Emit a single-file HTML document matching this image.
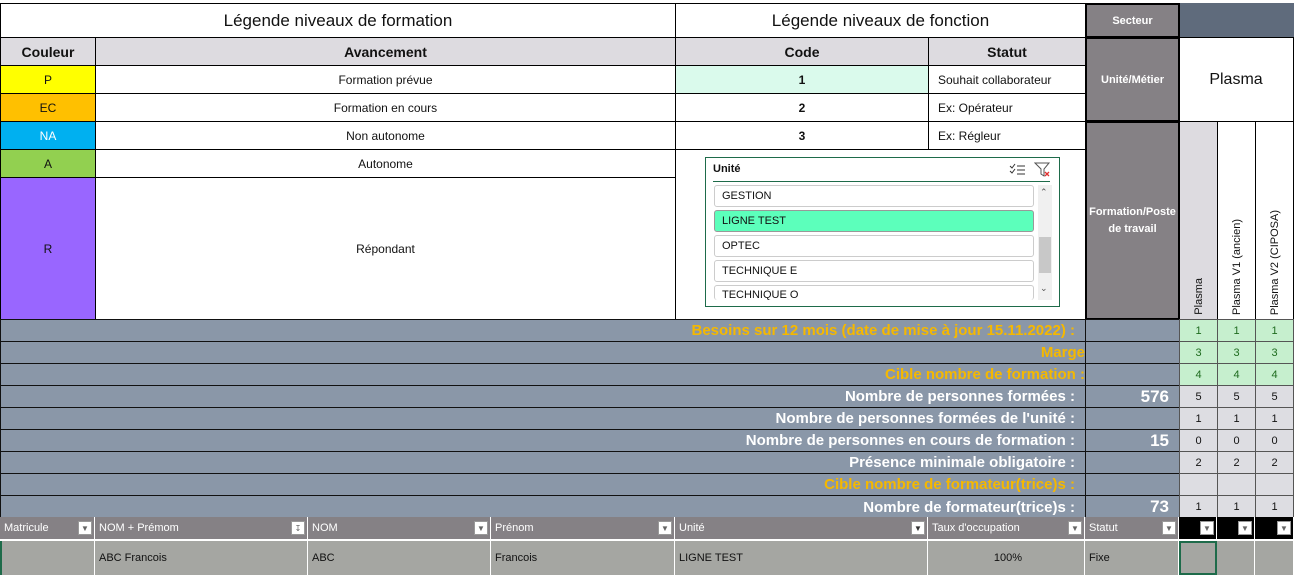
<!DOCTYPE html>
<html><head><meta charset="utf-8"><style>
*{box-sizing:border-box;margin:0;padding:0}
body{width:1294px;height:577px;background:#fff;position:relative;overflow:hidden;font-family:"Liberation Sans",Arial,sans-serif;font-size:12px;color:#111}
.c{position:absolute;display:flex;align-items:center;justify-content:center;border:1px solid #000;white-space:nowrap;overflow:hidden}
.r{justify-content:flex-end;padding-right:10px}
.l{justify-content:flex-start;padding-left:4px}
.st{background:#8a97a8;border-color:#111}
.or{color:#f5b800;font-weight:bold;font-size:15px}
.wh{color:#fff;font-weight:bold;font-size:15px}
.g{background:#c6efce;color:#1e6b1e;font-size:11px;border-color:#555}
.gy{background:#dddde2;font-size:11px;border-color:#555}
.h{background:#858185;color:#fff;font-size:11px;border:none;border-right:1px solid #fff;justify-content:flex-start;padding-left:4px}
.dd{position:absolute;right:2px;top:4px;width:14px;height:14px;background:#fff;border:1px solid #999;font-size:8px;color:#666;display:flex;align-items:center;justify-content:center}
.d{background:#a5a6a2;border:none;border-right:1px solid #fff;justify-content:flex-start;padding-left:4px;font-size:11px}
.v{writing-mode:vertical-rl;transform:rotate(180deg);font-size:11px;padding-top:4px}
.it{position:absolute;left:8px;width:320px;height:22px;border:1px solid #ccc;border-radius:3px;background:#fff;font-size:11px;display:flex;align-items:center;padding-left:7px}
</style></head><body>
<!-- top titles -->
<div class="c" style="left:0;top:3px;width:676px;height:35px;font-size:17px">Légende niveaux de formation</div>
<div class="c" style="left:675px;top:3px;width:411px;height:35px;font-size:17px">Légende niveaux de fonction</div>
<div class="c" style="left:0;top:37px;width:96px;height:29px;background:#dddbe0;font-weight:bold;font-size:14px">Couleur</div>
<div class="c" style="left:95px;top:37px;width:581px;height:29px;background:#dddbe0;font-weight:bold;font-size:14px">Avancement</div>
<div class="c" style="left:675px;top:37px;width:254px;height:29px;background:#dddbe0;font-weight:bold;font-size:14px">Code</div>
<div class="c" style="left:928px;top:37px;width:158px;height:29px;background:#dddbe0;font-weight:bold;font-size:14px">Statut</div>

<div class="c" style="left:0;top:65px;width:96px;height:29px;background:#ffff00">P</div>
<div class="c" style="left:95px;top:65px;width:581px;height:29px">Formation prévue</div>
<div class="c" style="left:0;top:93px;width:96px;height:29px;background:#ffc000">EC</div>
<div class="c" style="left:95px;top:93px;width:581px;height:29px">Formation en cours</div>
<div class="c" style="left:0;top:121px;width:96px;height:29px;background:#00b0f0;color:#fff">NA</div>
<div class="c" style="left:95px;top:121px;width:581px;height:29px">Non autonome</div>
<div class="c" style="left:0;top:149px;width:96px;height:29px;background:#92d050">A</div>
<div class="c" style="left:95px;top:149px;width:581px;height:29px">Autonome</div>
<div class="c" style="left:0;top:177px;width:96px;height:143px;background:#9966ff">R</div>
<div class="c" style="left:95px;top:177px;width:581px;height:143px">Répondant</div>

<div class="c" style="left:675px;top:65px;width:254px;height:29px;background:#dafaec;font-weight:bold">1</div>
<div class="c l" style="left:928px;top:65px;width:158px;height:29px;padding-left:9px">Souhait collaborateur</div>
<div class="c" style="left:675px;top:93px;width:254px;height:29px;font-weight:bold">2</div>
<div class="c l" style="left:928px;top:93px;width:158px;height:29px;padding-left:9px">Ex: Opérateur</div>
<div class="c" style="left:675px;top:121px;width:254px;height:29px;font-weight:bold">3</div>
<div class="c l" style="left:928px;top:121px;width:158px;height:29px;padding-left:9px">Ex: Régleur</div>
<div class="c" style="left:675px;top:149px;width:411px;height:171px;border-top:1px solid #000"></div>

<!-- slicer -->
<div style="position:absolute;left:705px;top:157px;width:355px;height:150px;border:1px solid #1e6b4a;background:#fff">
 <div style="position:absolute;left:7px;top:5px;font-weight:bold;font-size:11px">Unité</div>
 <svg style="position:absolute;left:303px;top:5px" width="18" height="14" viewBox="0 0 18 14"><path d="M1 3l2 2 3-4M1 8l2 2 3-4M8 3h8M8 7h8M8 11h8" stroke="#333" fill="none" stroke-width="1"/></svg>
 <svg style="position:absolute;left:328px;top:4px" width="18" height="16" viewBox="0 0 18 16"><path d="M1 1h14l-5 6v7l-3-2V7z" stroke="#555" fill="none"/><path d="M11 10l4 4M15 10l-4 4" stroke="#e03030" stroke-width="1.3"/></svg>
 <div style="position:absolute;left:7px;top:23px;width:337px;height:1px;background:#1e6b4a"></div>
 <div class="it" style="top:27px">GESTION</div>
 <div class="it" style="top:52px;background:#5cffbb;border-color:#999">LIGNE TEST</div>
 <div class="it" style="top:77px">OPTEC</div>
 <div class="it" style="top:102px">TECHNIQUE E</div>
 <div class="it" style="top:127px;height:15px;overflow:hidden;align-items:flex-start;padding-top:3px;border-bottom:none">TECHNIQUE O</div>
 <div style="position:absolute;left:332px;top:27px;width:14px;height:115px;background:#f0f0f0"></div>
 <div style="position:absolute;left:333px;top:79px;width:12px;height:36px;background:#c8c8c8"></div>
 <div style="position:absolute;left:334px;top:29px;font-size:9px;color:#555">&#8963;</div>
 <div style="position:absolute;left:334px;top:125px;font-size:9px;color:#555">&#8964;</div>
</div>

<!-- right header -->
<div class="c" style="left:1085px;top:3px;width:95px;height:35px;background:#858185;color:#fff;font-weight:bold;font-size:11px;border-width:2px">Secteur</div>
<div class="c" style="left:1085px;top:37px;width:95px;height:85px;background:#858185;color:#fff;font-weight:bold;font-size:11px;border-width:2px">Unité/Métier</div>
<div class="c" style="left:1085px;top:121px;width:95px;height:199px;background:#858185;color:#fff;font-weight:bold;font-size:11px;border-width:2px;white-space:normal;text-align:center;line-height:17px">Formation/Poste de travail</div>
<div style="position:absolute;left:1180px;top:3px;width:114px;height:34px;background:#5f6b7c"></div>
<div class="c" style="left:1179px;top:37px;width:115px;height:85px;font-size:16px;border-left:none">Plasma</div>
<div class="c" style="left:1179px;top:121px;width:39px;height:199px;background:#dddbe0;align-items:flex-end"><span class="v">Plasma</span></div>
<div class="c" style="left:1217px;top:121px;width:39px;height:199px;align-items:flex-end"><span class="v">Plasma V1 (ancien)</span></div>
<div class="c" style="left:1255px;top:121px;width:39px;height:199px;align-items:flex-end"><span class="v">Plasma V2 (CIPOSA)</span></div>

<!-- stats -->
<div class="c st r or" style="left:0;top:319px;width:1086px;height:23px">Besoins sur 12 mois (date de mise à jour 15.11.2022) :</div>
<div class="c st r or" style="left:0;top:341px;width:1086px;height:23px;padding-right:0">Marge</div>
<div class="c st r or" style="left:0;top:363px;width:1086px;height:23px;padding-right:0">Cible nombre de formation :</div>
<div class="c st r wh" style="left:0;top:385px;width:1086px;height:23px">Nombre de personnes formées :</div>
<div class="c st r wh" style="left:0;top:407px;width:1086px;height:23px">Nombre de personnes formées de l'unité :</div>
<div class="c st r wh" style="left:0;top:429px;width:1086px;height:23px">Nombre de personnes en cours de formation :</div>
<div class="c st r wh" style="left:0;top:451px;width:1086px;height:23px">Présence minimale obligatoire :</div>
<div class="c st r or" style="left:0;top:473px;width:1086px;height:23px">Cible nombre de formateur(trice)s :</div>
<div class="c st r wh" style="left:0;top:495px;width:1086px;height:23px;border-bottom:none">Nombre de formateur(trice)s :</div>

<div class="c st r wh" style="left:1085px;top:319px;width:95px;height:23px"></div>
<div class="c st r wh" style="left:1085px;top:341px;width:95px;height:23px"></div>
<div class="c st r wh" style="left:1085px;top:363px;width:95px;height:23px"></div>
<div class="c st r wh" style="left:1085px;top:385px;width:95px;height:23px;font-size:17px">576</div>
<div class="c st r wh" style="left:1085px;top:407px;width:95px;height:23px"></div>
<div class="c st r wh" style="left:1085px;top:429px;width:95px;height:23px;font-size:17px">15</div>
<div class="c st r wh" style="left:1085px;top:451px;width:95px;height:23px"></div>
<div class="c st r wh" style="left:1085px;top:473px;width:95px;height:23px"></div>
<div class="c st r wh" style="left:1085px;top:495px;width:95px;height:23px;font-size:17px;border-bottom:none">73</div>

<div class="c g" style="left:1179px;top:319px;width:39px;height:23px">1</div><div class="c g" style="left:1217px;top:319px;width:39px;height:23px">1</div><div class="c g" style="left:1255px;top:319px;width:39px;height:23px">1</div>
<div class="c g" style="left:1179px;top:341px;width:39px;height:23px">3</div><div class="c g" style="left:1217px;top:341px;width:39px;height:23px">3</div><div class="c g" style="left:1255px;top:341px;width:39px;height:23px">3</div>
<div class="c g" style="left:1179px;top:363px;width:39px;height:23px">4</div><div class="c g" style="left:1217px;top:363px;width:39px;height:23px">4</div><div class="c g" style="left:1255px;top:363px;width:39px;height:23px">4</div>
<div class="c gy" style="left:1179px;top:385px;width:39px;height:23px">5</div><div class="c gy" style="left:1217px;top:385px;width:39px;height:23px">5</div><div class="c gy" style="left:1255px;top:385px;width:39px;height:23px">5</div>
<div class="c gy" style="left:1179px;top:407px;width:39px;height:23px">1</div><div class="c gy" style="left:1217px;top:407px;width:39px;height:23px">1</div><div class="c gy" style="left:1255px;top:407px;width:39px;height:23px">1</div>
<div class="c gy" style="left:1179px;top:429px;width:39px;height:23px">0</div><div class="c gy" style="left:1217px;top:429px;width:39px;height:23px">0</div><div class="c gy" style="left:1255px;top:429px;width:39px;height:23px">0</div>
<div class="c gy" style="left:1179px;top:451px;width:39px;height:23px">2</div><div class="c gy" style="left:1217px;top:451px;width:39px;height:23px">2</div><div class="c gy" style="left:1255px;top:451px;width:39px;height:23px">2</div>
<div class="c gy" style="left:1179px;top:473px;width:39px;height:23px"></div><div class="c gy" style="left:1217px;top:473px;width:39px;height:23px"></div><div class="c gy" style="left:1255px;top:473px;width:39px;height:23px"></div>
<div class="c gy" style="left:1179px;top:495px;width:39px;height:23px">1</div><div class="c gy" style="left:1217px;top:495px;width:39px;height:23px">1</div><div class="c gy" style="left:1255px;top:495px;width:39px;height:23px">1</div>

<!-- table header -->
<div class="c h" style="left:0;top:517px;width:95px;height:22px">Matricule<div class="dd">&#9660;</div></div>
<div class="c h" style="left:95px;top:517px;width:213px;height:22px">NOM + Prémom<div class="dd">&#8615;</div></div>
<div class="c h" style="left:308px;top:517px;width:183px;height:22px">NOM<div class="dd">&#9660;</div></div>
<div class="c h" style="left:491px;top:517px;width:184px;height:22px">Prénom<div class="dd">&#9660;</div></div>
<div class="c h" style="left:675px;top:517px;width:253px;height:22px">Unité<div class="dd" style="color:#333">&#9660;</div></div>
<div class="c h" style="left:928px;top:517px;width:157px;height:22px">Taux d'occupation<div class="dd">&#9660;</div></div>
<div class="c h" style="left:1085px;top:517px;width:94px;height:22px">Statut<div class="dd">&#9660;</div></div>
<div class="c h" style="left:1179px;top:517px;width:38px;height:22px;background:#000"><div class="dd">&#9660;</div></div>
<div class="c h" style="left:1217px;top:517px;width:38px;height:22px;background:#000"><div class="dd">&#9660;</div></div>
<div class="c h" style="left:1255px;top:517px;width:39px;height:22px;background:#000"><div class="dd">&#9660;</div></div>
<div style="position:absolute;left:0;top:539px;width:1294px;height:2px;background:#fff"></div>
<!-- data row -->
<div class="c d" style="left:0;top:541px;width:95px;height:34px;border-left:2px solid #1e6b4a"></div>
<div class="c d" style="left:95px;top:541px;width:213px;height:34px">ABC Francois</div>
<div class="c d" style="left:308px;top:541px;width:183px;height:34px">ABC</div>
<div class="c d" style="left:491px;top:541px;width:184px;height:34px">Francois</div>
<div class="c d" style="left:675px;top:541px;width:253px;height:34px">LIGNE TEST</div>
<div class="c d" style="left:928px;top:541px;width:157px;height:34px;justify-content:center">100%</div>
<div class="c d" style="left:1085px;top:541px;width:94px;height:34px">Fixe</div>
<div class="c d" style="left:1179px;top:541px;width:38px;height:34px;border:2px solid #1e6b4a"></div>
<div class="c d" style="left:1217px;top:541px;width:38px;height:34px"></div>
<div class="c d" style="left:1255px;top:541px;width:39px;height:34px"></div>
</body></html>
